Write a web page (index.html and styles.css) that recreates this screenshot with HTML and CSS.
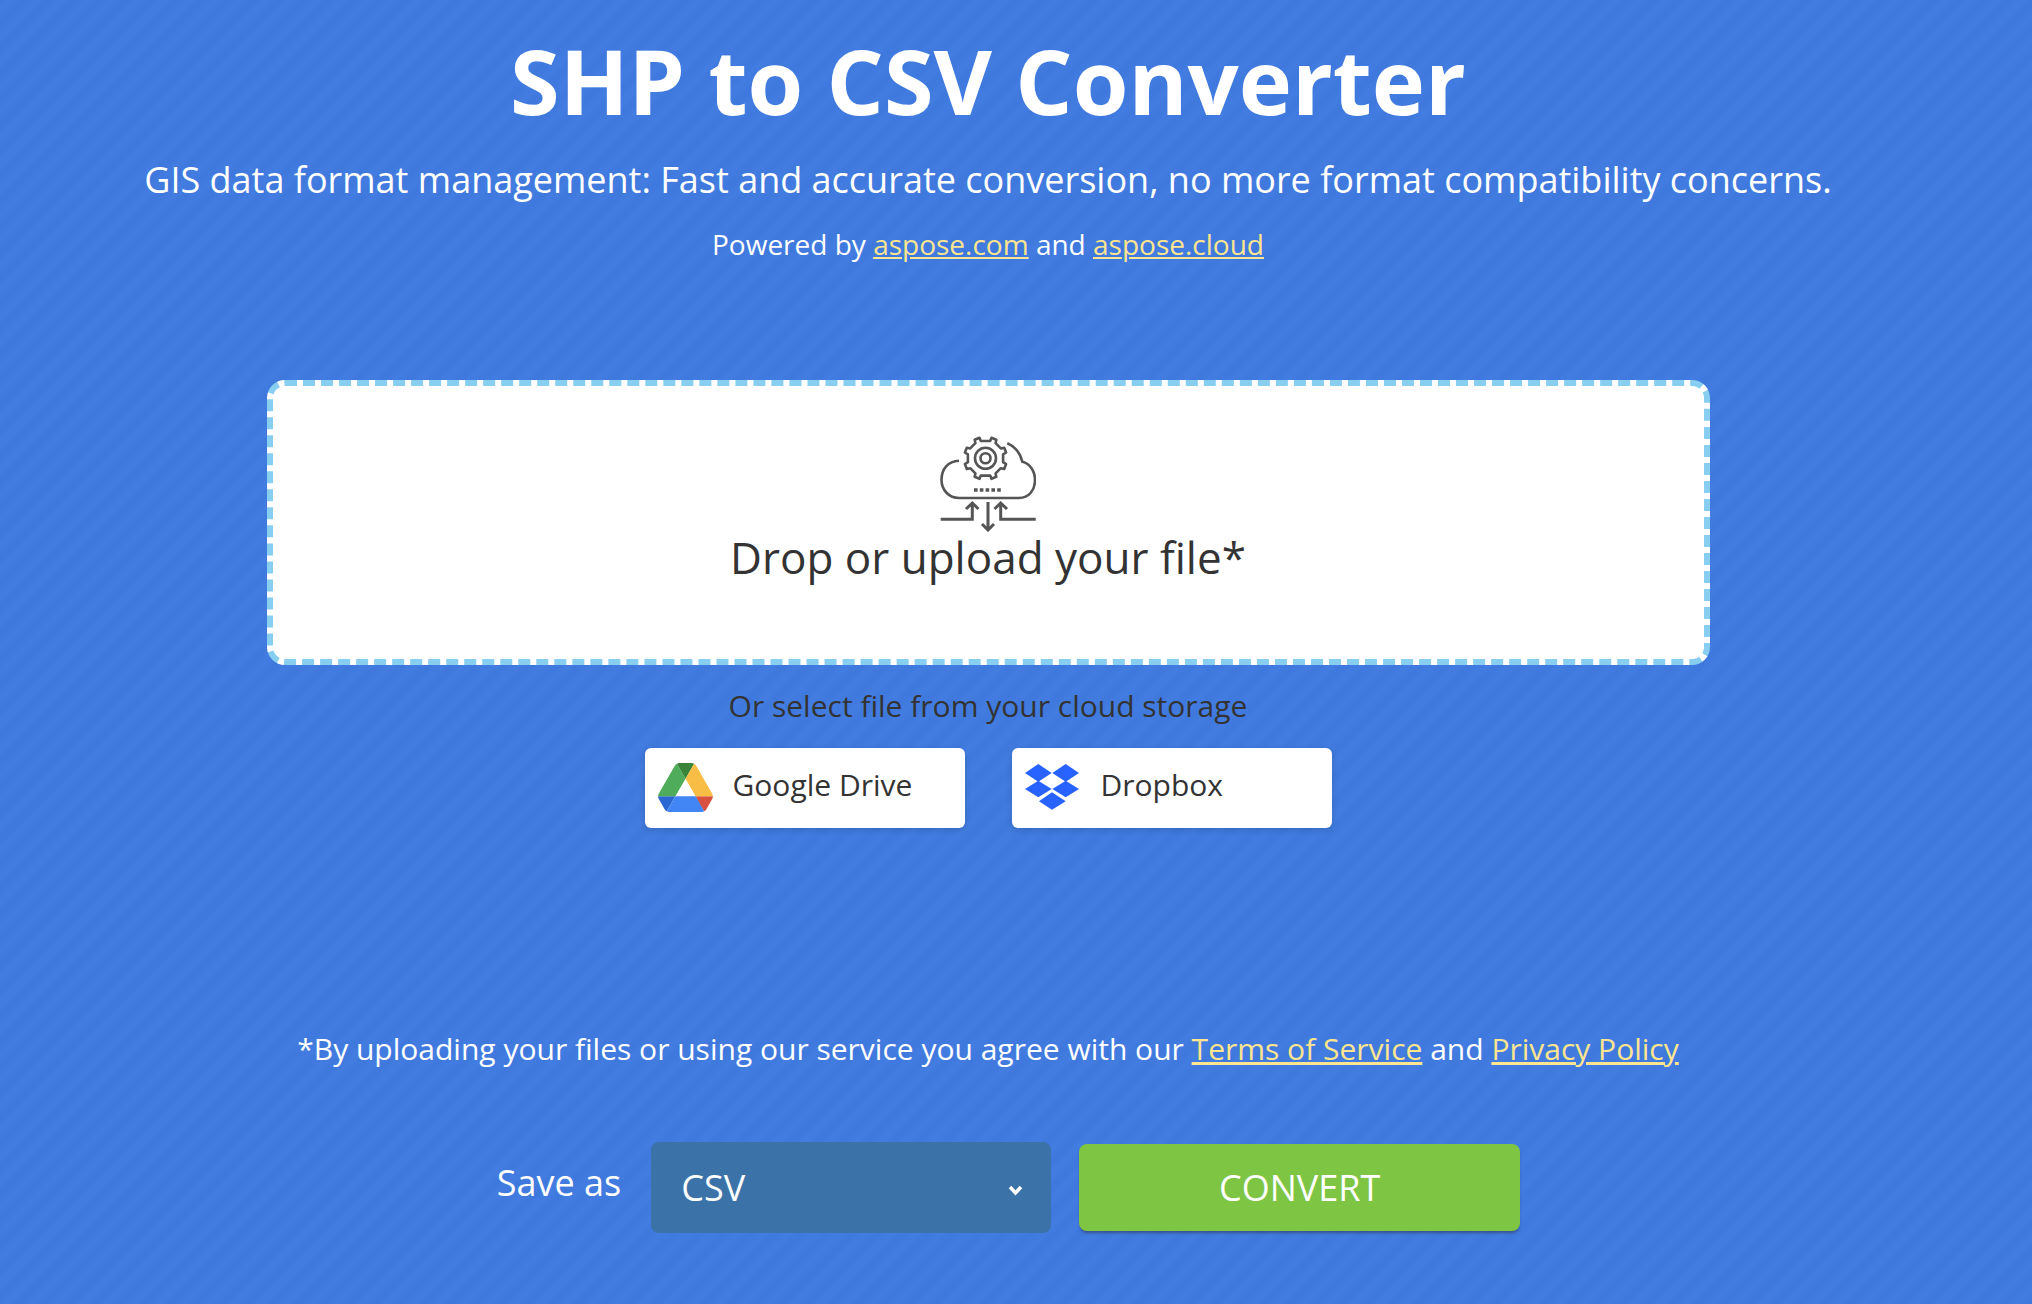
FILE: index.html
```html
<!DOCTYPE html>
<html lang="en">
<head>
    <meta charset="UTF-8">
    <title>SHP to CSV Converter</title>
    <link rel="stylesheet" href="styles.css">
</head>
<body>
    <div class="page">
        <h1>SHP to CSV Converter</h1>
        <p class="subtitle">GIS data format management: Fast and accurate conversion, no more format compatibility concerns.</p>
        <p class="powered">Powered by <a href="#">aspose.com</a> and <a href="#">aspose.cloud</a></p>

        <div class="dropzone">
            <svg class="upload-icon" viewBox="0 0 96 96" fill="none" stroke="#555" stroke-width="2.600">
                <path d="M19 24.700C8 25 1.500 33 1.500 44C1.500 54 9 62 19 62H79C89 62 95 54 95 44C95 35 90 27.500 82.300 25.700C80 16 75 10.500 67.300 7.300"/>
                <path stroke-width="3.500" stroke-dasharray="3.600 2.200" d="M34 54H62"/>
                <circle cx="45.500" cy="22.300" r="10.500"/>
                <circle cx="45.500" cy="22.300" r="5"/>
                <path transform="translate(0.800 0)" d="M38.700 1.800L40 5L49.400 5L50.700 1.800L55.500 3.800L54.800 7.200L60 12.400L63.400 11.700L65.300 16.500L62.300 18.400V26.200L65.300 28.100L63.400 32.900L60 32.200L54.800 37.400L55.500 40.800L50.700 42.800L49.400 39.600H40L38.700 42.800L33.900 40.800L34.600 37.400L29.400 32.200L26 32.900L24.100 28.100L27.100 26.200V18.400L24.100 16.500L26 11.700L29.400 12.400L34.600 7.200L33.900 3.800Z" stroke-linejoin="round"/>
                <path stroke-width="3" d="M0.700 83.300H32.300V68M26 73L32.300 67L38.500 73"/>
                <path stroke-width="3" d="M95.700 83.300H60.700V68M54.500 73L60.700 67L67 73"/>
                <path stroke-width="3" d="M48 66V94M42 88L48 94L54 88"/>
            </svg>
            <div class="drop-text">Drop or upload your file*</div>
        </div>

        <p class="cloud-label">Or select file from your cloud storage</p>
        <div class="cloud-buttons">
            <button class="cloud-btn">
                <svg class="drive-icon" viewBox="0 0 87.300 78">
                    <path d="m6.600 66.850 3.850 6.650c.8 1.400 1.950 2.500 3.300 3.300l13.750-23.800h-27.500c0 1.550.4 3.100 1.200 4.500z" fill="#2a67d2"/>
                    <path d="m43.650 25-13.750-23.800c-1.350.8-2.500 1.900-3.300 3.300l-25.400 44a9.060 9.060 0 0 0 -1.200 4.500h27.500z" fill="#4fac5b"/>
                    <path d="m73.550 76.800c1.350-.8 2.500-1.900 3.300-3.300l1.600-2.750 7.650-13.250c.8-1.400 1.200-2.950 1.200-4.500h-27.502l5.852 11.500z" fill="#d9513f"/>
                    <path d="m43.650 25 13.750-23.800c-1.350-.8-2.900-1.200-4.500-1.200h-18.500c-1.600 0-3.150.45-4.500 1.200z" fill="#3a8437"/>
                    <path d="m59.800 53h-32.300l-13.750 23.800c1.350.8 2.900 1.200 4.500 1.200h50.800c1.600 0 3.150-.45 4.500-1.200z" fill="#4285f4"/>
                    <path d="m73.400 26.500-12.700-22c-.8-1.400-1.950-2.500-3.300-3.300l-13.750 23.800 16.150 28h27.450c0-1.550-.4-3.100-1.200-4.500z" fill="#f8bd45"/>
                </svg>
                Google Drive
            </button>
            <button class="cloud-btn">
                <svg class="dropbox-icon" viewBox="0 0 54 46" fill="#2862ff">
                    <polygon points="0,9 13.300,0 26.700,9 13.300,17.700"/>
                    <polygon points="27.300,9 40.700,0 54,9 40.700,17.700"/>
                    <polygon points="0,25 13.300,16.700 26.700,25 13.300,33.300"/>
                    <polygon points="27.300,25 40.700,16.700 54,25 40.700,33.300"/>
                    <polygon points="14,37.300 27,28.300 40.700,37.300 27,45.700"/>
                </svg>
                Dropbox
            </button>
        </div>

        <p class="terms">*By uploading your files or using our service you agree with our <a href="#">Terms of Service</a> and <a href="#">Privacy Policy</a></p>

        <div class="save-row">
            <label class="save-label" for="format">Save as</label>
            <div class="select-wrap">
                <select id="format" class="format-select">
                    <option>CSV</option>
                </select>
                <svg class="chevron" viewBox="0 0 17 11" fill="none" stroke="#fff" stroke-width="3.500">
                    <path d="M3 2L8.500 8L14 2"/>
                </svg>
            </div>
            <button class="convert-btn">CONVERT</button>
        </div>
    </div>
</body>
</html>
```

FILE: styles.css
```css
* {
    box-sizing: border-box;
}

html, body {
    height: 100%;
}

body {
    margin: 0;
    overflow: hidden;
    font-family: "Open Sans", sans-serif;
    color: #fff;
    background-color: #417be0;
    background-image: repeating-linear-gradient(-45deg, #3f79dd 0, #3f79dd 4px, #427ce0 9px, #427ce0 13px, #3f79dd 18px);
}

.page {
    width: 1976px;
    display: flex;
    flex-direction: column;
    align-items: center;
}

h1 {
    margin: 22px 0 0;
    font-size: 90px;
    line-height: 116px;
    font-weight: 700;
}

.subtitle {
    margin: 17px 0 0;
    font-size: 36px;
    line-height: 50px;
}

.powered {
    margin: 19px 0 0;
    font-size: 28px;
    line-height: 40px;
}

a {
    color: #ffe58f;
}

.dropzone {
    margin-top: 116px;
    width: 1443px;
    height: 285px;
    padding-top: 50px;
    background: #fff;
    border: 6px dashed #87cef0;
    border-radius: 18px;
    display: flex;
    flex-direction: column;
    align-items: center;
    color: #333;
}

.upload-icon {
    width: 96px;
    height: 96px;
    flex: none;
}

.drop-text {
    margin-top: -5px;
    font-size: 44px;
    line-height: 60px;
}

.cloud-label {
    margin: 21px 0 0;
    font-size: 30px;
    line-height: 40px;
    color: #333;
}

.cloud-buttons {
    margin-top: 22px;
    display: flex;
    gap: 47px;
}

.cloud-btn {
    width: 320px;
    height: 80px;
    padding: 0 0 8px 13px;
    display: flex;
    align-items: center;
    background: #fff;
    border: none;
    border-radius: 6px;
    box-shadow: 0 2px 6px rgba(0, 0, 0, 0.15);
    font-family: inherit;
    font-size: 30px;
    color: #333;
}

.drive-icon {
    width: 55px;
    height: 49px;
    margin: 6px 20px 0 0;
}

.dropbox-icon {
    width: 54px;
    height: 46px;
    margin: 6px 22px 0 0;
}

.terms {
    margin: 201px 0 0;
    font-size: 30px;
    line-height: 40px;
}

.save-row {
    margin: 73px 0 0 41px;
    display: flex;
    align-items: center;
}

.save-label {
    font-size: 36px;
    margin-right: 30px;
    position: relative;
    top: -5px;
}

.select-wrap {
    position: relative;
    width: 400px;
    height: 91px;
    margin-right: 28px;
}

.format-select {
    width: 100%;
    height: 100%;
    padding: 0 30px;
    appearance: none;
    background: #3b72a8;
    border: none;
    border-radius: 8px;
    font-family: inherit;
    font-size: 36px;
    color: #fff;
}

.chevron {
    position: absolute;
    right: 27px;
    top: 43px;
    width: 17px;
    height: 11px;
}

.convert-btn {
    width: 441px;
    height: 87px;
    background: #7ec544;
    border: none;
    border-radius: 8px;
    box-shadow: 0 3px 3px -1px rgba(50, 50, 80, 0.55);
    font-family: inherit;
    font-size: 36px;
    color: #fff;
}
```
